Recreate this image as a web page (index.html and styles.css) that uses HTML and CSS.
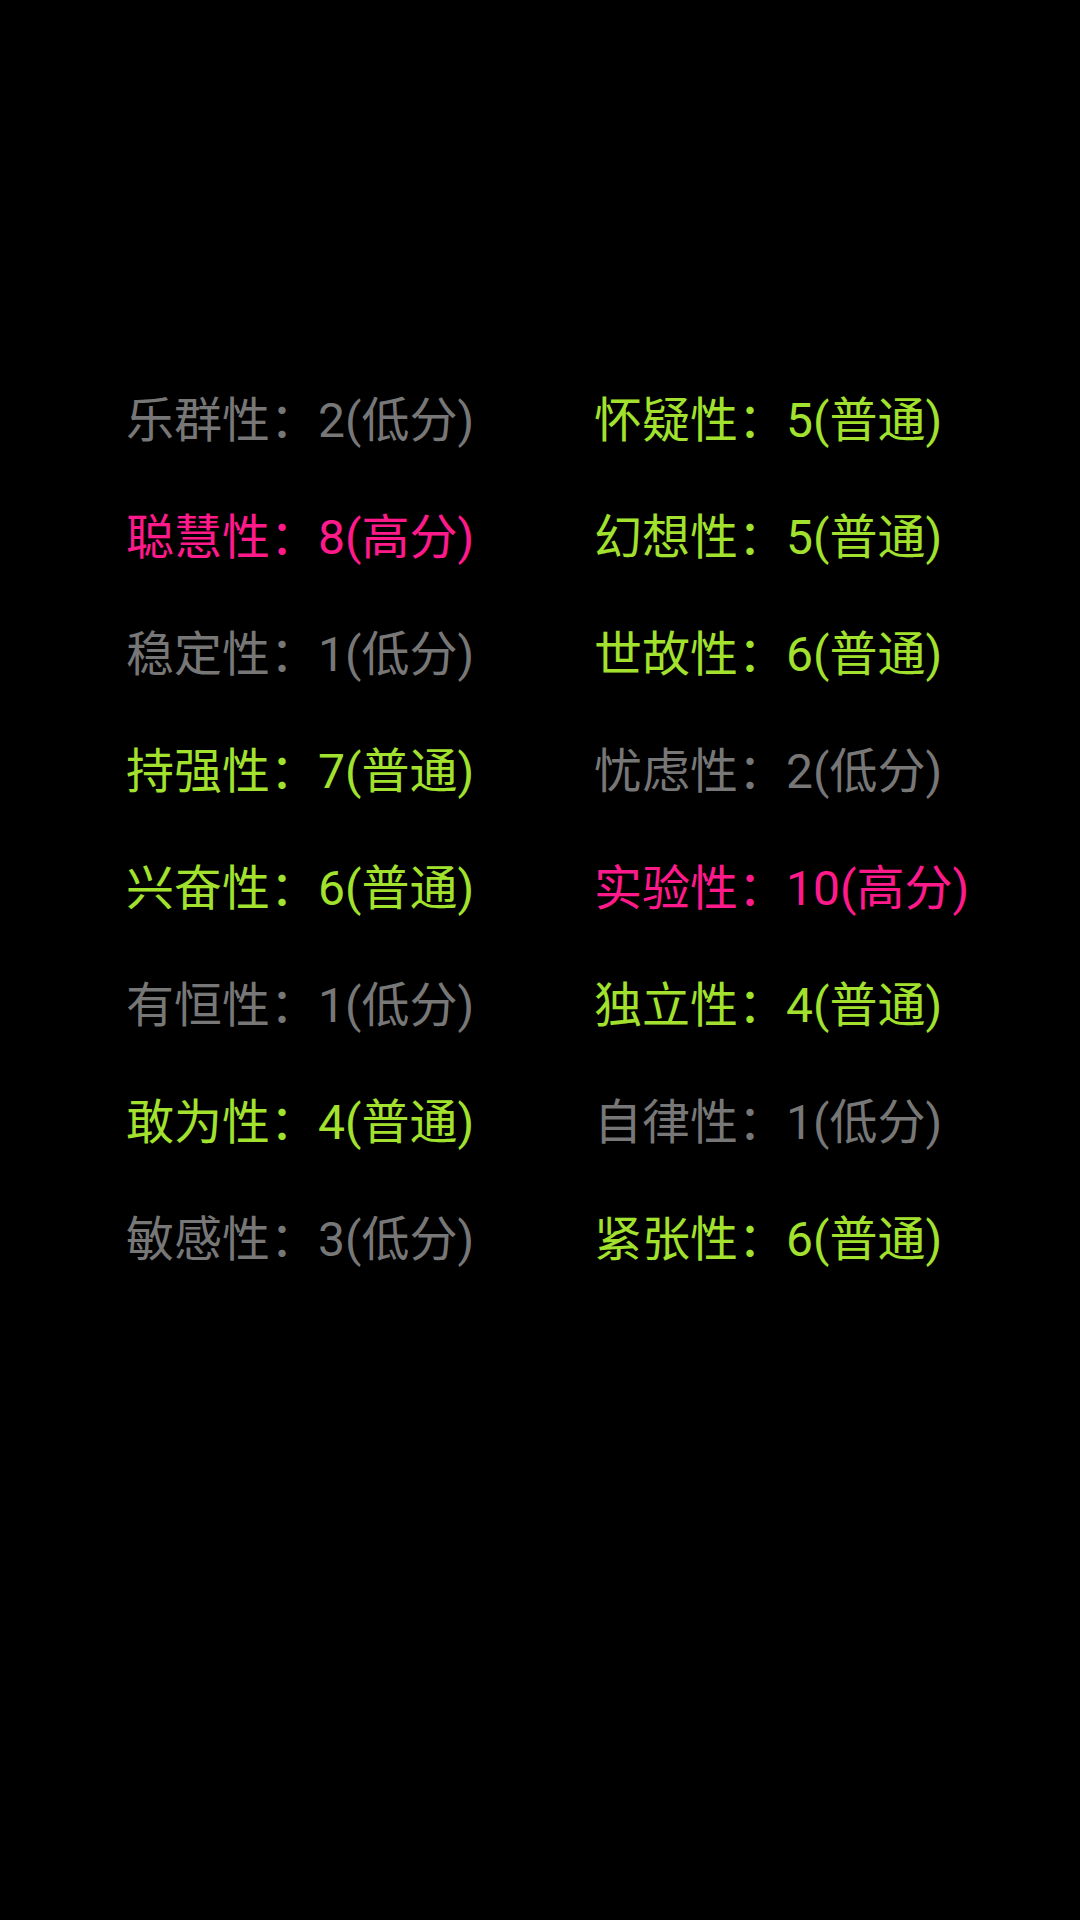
FILE: index.html
```html
<!DOCTYPE html>
<html lang="zh-CN">
<head>
<meta charset="utf-8">
<link rel="stylesheet" href="styles.css">
</head>
<body>
<div class="grid">
  <div class="item low">乐群性：2(低分)</div>
  <div class="item mid">怀疑性：5(普通)</div>
  <div class="item high">聪慧性：8(高分)</div>
  <div class="item mid">幻想性：5(普通)</div>
  <div class="item low">稳定性：1(低分)</div>
  <div class="item mid">世故性：6(普通)</div>
  <div class="item mid">持强性：7(普通)</div>
  <div class="item low">忧虑性：2(低分)</div>
  <div class="item mid">兴奋性：6(普通)</div>
  <div class="item high">实验性：10(高分)</div>
  <div class="item low">有恒性：1(低分)</div>
  <div class="item mid">独立性：4(普通)</div>
  <div class="item mid">敢为性：4(普通)</div>
  <div class="item low">自律性：1(低分)</div>
  <div class="item low">敏感性：3(低分)</div>
  <div class="item mid">紧张性：6(普通)</div>
</div>
</body>
</html>
```
FILE: styles.css
```css
html, body {
  margin: 0;
  padding: 0;
  background: #000;
  width: 1080px;
  height: 1920px;
  overflow: hidden;
}
.grid {
  display: grid;
  grid-template-columns: 468px 400px;
  padding: 362px 0 0 126px;
  font-family: Roboto, "Noto Sans CJK SC", sans-serif;
  font-size: 48px;
}
.item {
  height: 117px;
  line-height: 117px;
  white-space: nowrap;
}
.low { color: #777777; }
.mid { color: #a2e22e; }
.high { color: #ff1a8c; }
```
